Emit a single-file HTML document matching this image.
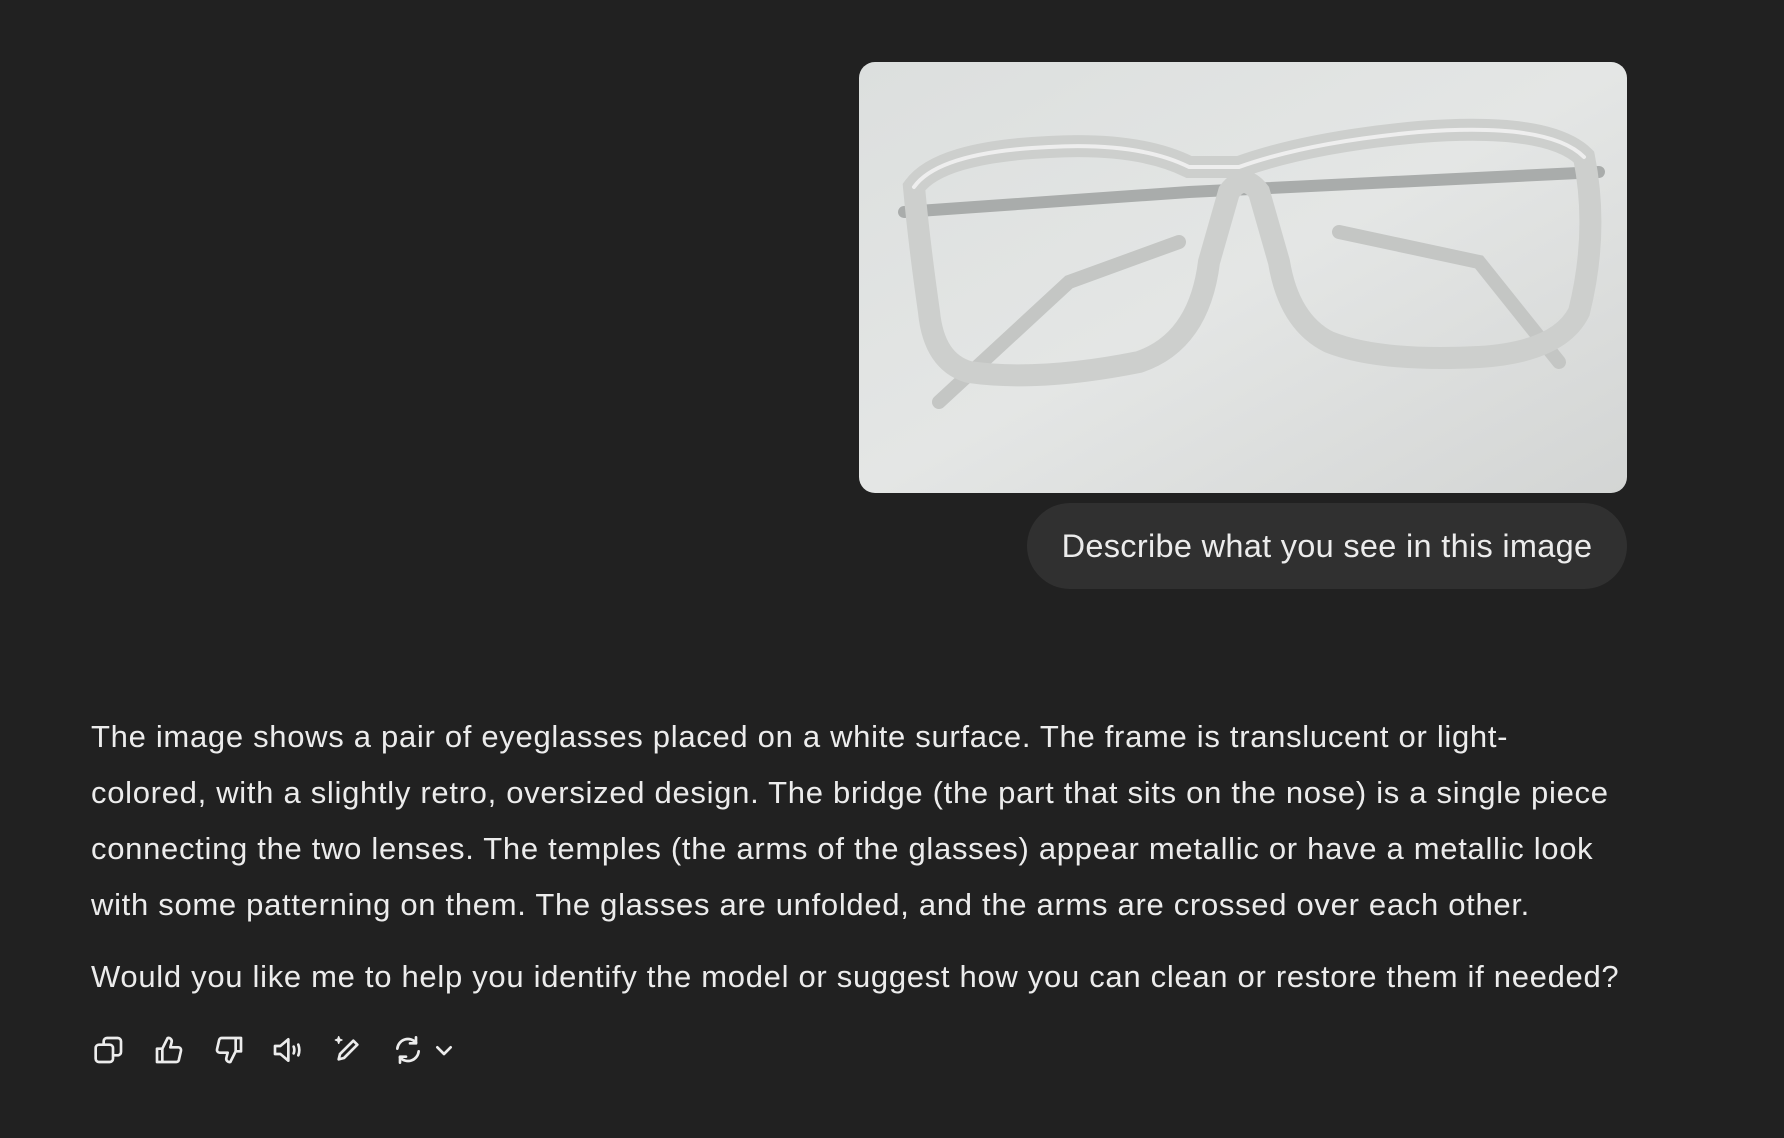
<!DOCTYPE html>
<html><head><meta charset="utf-8"><style>
html,body{margin:0;padding:0;background:#212121;width:1784px;height:1138px;overflow:hidden;font-family:"Liberation Sans",sans-serif;color:#ececec}
.img{position:absolute;left:859px;top:62px;width:768px;height:431px;border-radius:16px;overflow:hidden}
.bubble{position:absolute;left:1027px;top:503px;width:600px;height:86px;border-radius:43px;background:#303030;box-sizing:border-box;text-align:center;line-height:86px;font-size:32.5px;letter-spacing:0.3px}
.p{position:absolute;left:91px;font-size:31px;letter-spacing:0.7px;white-space:nowrap}
.icons{position:absolute;left:91px;top:1034px;}
.icons svg{position:absolute;top:0}
</style></head><body>
<div class="img">
<svg width="768" height="431" viewBox="0 0 768 431">
<defs><linearGradient id="g" x1="0" y1="0" x2="1" y2="1"><stop offset="0" stop-color="#dcdfde"/><stop offset="0.5" stop-color="#e4e6e5"/><stop offset="1" stop-color="#d3d5d4"/></linearGradient></defs>
<rect width="768" height="431" fill="url(#g)"/>
<g fill="none" stroke-linecap="round">
<path d="M80 340 L210 220 L320 180" stroke-width="14" stroke="#c4c6c4"/>
<path d="M700 300 L620 200 L480 170" stroke-width="14" stroke="#c4c6c4"/>
<path d="M45 150 L330 130 L740 110" stroke-width="12" stroke="#a9acab"/>
<path d="M55 125 Q80 90 190 85 Q280 80 330 105 L380 105 Q450 80 560 70 Q690 60 725 95 Q740 170 720 250 Q700 290 620 295 Q520 300 470 280 Q430 260 420 200 L400 130 Q385 110 370 130 L350 200 Q340 280 280 300 Q180 320 110 310 Q75 300 70 250 Q60 180 55 125 Z" stroke-width="22" stroke="#cdcfcd"/>
<path d="M55 125 Q80 90 190 85 Q280 80 330 105 L380 105 Q450 80 560 70 Q690 60 725 95" stroke-width="4" stroke="#eeeeee"/>
</g>
</svg>
</div>
<div class="bubble">Describe what you see in this image</div>
<div class="p" style="top:709px;line-height:56px">The image shows a pair of eyeglasses placed on a white surface. The frame is translucent or light-<br>colored, with a slightly retro, oversized design. The bridge (the part that sits on the nose) is a single piece<br>connecting the two lenses. The temples (the arms of the glasses) appear metallic or have a metallic look<br>with some patterning on them. The glasses are unfolded, and the arms are crossed over each other.</div>
<div class="p" style="top:949px;line-height:56px">Would you like me to help you identify the model or suggest how you can clean or restore them if needed?</div>
<div class="icons">
<svg style="left:2px" width="32" height="32" viewBox="0 0 24 24" fill="none" stroke="#ececec" stroke-width="2" stroke-linejoin="round"><rect x="2" y="8" width="13" height="13" rx="2.5"/><path d="M8 8V5.5A2.5 2.5 0 0 1 10.5 3h8A2.5 2.5 0 0 1 21 5.5v8a2.5 2.5 0 0 1-2.5 2.5H15"/></svg>
<svg style="left:62px" width="32" height="32" viewBox="0 0 24 24" fill="none" stroke="#ececec" stroke-width="2" stroke-linejoin="round"><path d="M3 11h4v10H3zM7 11l4-8a2.5 2.5 0 0 1 3 3l-1 4h6a2 2 0 0 1 2 2.4l-1.5 6.5A2 2 0 0 1 17.5 21H7"/></svg>
<svg style="left:122px" width="32" height="32" viewBox="0 0 24 24" fill="none" stroke="#ececec" stroke-width="2" stroke-linejoin="round"><path d="M21 13h-4V3h4zM17 13l-4 8a2.5 2.5 0 0 1-3-3l1-4H5a2 2 0 0 1-2-2.4L4.5 5A2 2 0 0 1 6.5 3H17"/></svg>
<svg style="left:180px" width="36" height="32" viewBox="0 0 27 24" fill="none" stroke="#ececec" stroke-width="2" stroke-linejoin="round" stroke-linecap="round"><path d="M3 9h4l6-5v16l-6-5H3z"/><path d="M17 9.5q1 2.5 0 5M20.5 8q1.5 4 0 8"/></svg>
<svg style="left:241px" width="32" height="32" viewBox="0 0 24 24" fill="none" stroke="#ececec" stroke-width="2" stroke-linejoin="round" stroke-linecap="round"><path d="M16 5l3 3L9 18l-4 1 1-4z"/><path d="M5 2l.7 1.8L7.5 4.5 5.7 5.2 5 7 4.3 5.2 2.5 4.5 4.3 3.8z" fill="#ececec" stroke-width="1"/></svg>
<svg style="left:301px" width="32" height="32" viewBox="0 0 24 24" fill="none" stroke="#ececec" stroke-width="2" stroke-linejoin="round" stroke-linecap="round"><path d="M4 11a8 8 0 0 1 14-4.5M20 13a8 8 0 0 1-14 4.5"/><path d="M18 2.5v4.5h-4.5M6 21.5V17h4.5"/></svg>
<svg style="left:342px" width="22" height="32" viewBox="0 0 16 24" fill="none" stroke="#ececec" stroke-width="2" stroke-linecap="round" stroke-linejoin="round"><path d="M3 10l5 5 5-5"/></svg>
</div>
</body></html>
